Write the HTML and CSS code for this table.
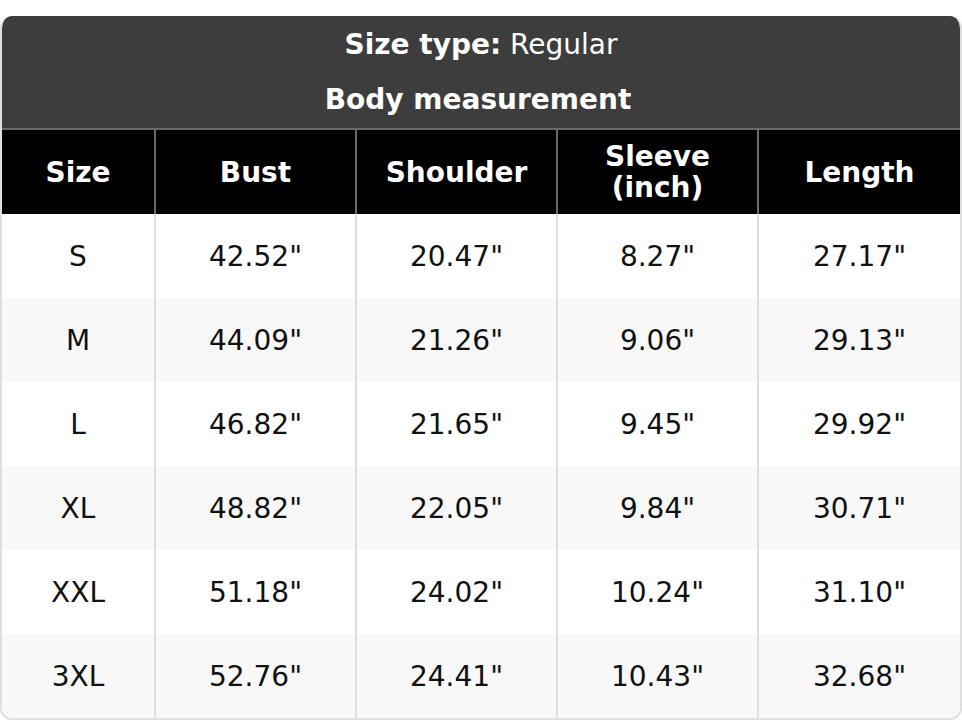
FILE: index.html
```html
<!DOCTYPE html>
<html lang="en">
<head>
<meta charset="utf-8">
<title>Size chart</title>
<link rel="stylesheet" href="styles.css">
</head>
<body>
<div class="card">
  <div class="banner">
    <div class="type"><b>Size type:</b> Regular</div>
    <div class="sub">Body measurement</div>
  </div>
  <table class="chart">
    <colgroup>
      <col class="c1"><col class="c2"><col class="c2"><col class="c2"><col>
    </colgroup>
    <thead>
      <tr><th>Size</th><th>Bust</th><th>Shoulder</th><th>Sleeve<br>(inch)</th><th>Length</th></tr>
    </thead>
    <tbody>
      <tr><td>S</td><td>42.52"</td><td>20.47"</td><td>8.27"</td><td>27.17"</td></tr>
      <tr><td>M</td><td>44.09"</td><td>21.26"</td><td>9.06"</td><td>29.13"</td></tr>
      <tr><td>L</td><td>46.82"</td><td>21.65"</td><td>9.45"</td><td>29.92"</td></tr>
      <tr><td>XL</td><td>48.82"</td><td>22.05"</td><td>9.84"</td><td>30.71"</td></tr>
      <tr><td>XXL</td><td>51.18"</td><td>24.02"</td><td>10.24"</td><td>31.10"</td></tr>
      <tr><td>3XL</td><td>52.76"</td><td>24.41"</td><td>10.43"</td><td>32.68"</td></tr>
    </tbody>
  </table>
</div>
</body>
</html>
```
FILE: styles.css
```css
html, body {
  margin: 0;
  padding: 0;
  background: #fff;
}
body {
  padding-top: 16px;
  font-family: "DejaVu Sans", "Liberation Sans", sans-serif;
}
.card {
  width: 958px;
  border: 2px solid #dedede;
  border-top: none;
  border-radius: 12px;
  overflow: hidden;
}
.banner {
  background: #3d3d3d;
  color: #fff;
  text-align: center;
  height: 112px;
  margin: 0 -2px;
  display: flex;
  flex-direction: column;
  align-items: center;
}
.type {
  font-size: 28px;
  line-height: 32px;
  margin-top: 13px;
}
.sub {
  font-size: 28px;
  font-weight: bold;
  line-height: 32px;
  margin-top: 23px;
  margin-right: 6px;
}
.chart {
  width: 958px;
  border-collapse: collapse;
  table-layout: fixed;
  border-top: 2px solid #6a6a6a;
}
.c1 { width: 153px; }
.c2 { width: 201px; }
.chart th {
  background: #000;
  color: #fff;
  font-size: 28px;
  font-weight: bold;
  line-height: 31px;
  height: 84px;
  padding: 0;
  border-left: 2px solid #6a6a6a;
}
.chart td {
  font-size: 28px;
  color: #111;
  text-align: center;
  height: 84px;
  padding: 0;
  border-left: 2px solid #dedede;
}
.chart th:first-child, .chart td:first-child {
  border-left: none;
}
.chart tbody tr:nth-child(even) td {
  background: #f8f8f8;
}
```
